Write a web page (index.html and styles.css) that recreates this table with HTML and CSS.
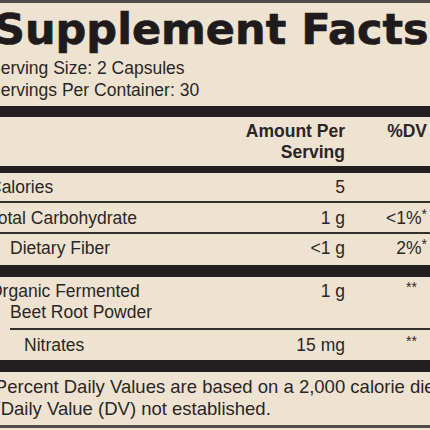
FILE: index.html
```html
<!DOCTYPE html>
<html lang="en">

<head>
    <meta charset="UTF-8">
    <meta name="viewport" content="width=device-width, initial-scale=1.0">
    <title>Supplement Facts</title>
    <link rel="stylesheet" href="styles.css">
</head>

<body>
    <div class="label">
        <h1 class="title">Supplement Facts</h1>
        <div class="serving">
            <p>Serving Size: 2 Capsules</p>
            <p>Servings Per Container: 30</p>
        </div>

        <div class="bar bar-lg"></div>
        <div class="row head">
            <span class="name"></span>
            <span class="amt">Amount Per<br>Serving</span>
            <span class="dv">%DV</span>
        </div>
        <div class="bar bar-md"></div>

        <div class="row row-first">
            <span class="name">Calories</span>
            <span class="amt">5</span>
            <span class="dv"></span>
        </div>
        <div class="rule"></div>
        <div class="row">
            <span class="name">Total Carbohydrate</span>
            <span class="amt">1 g</span>
            <span class="dv">&lt;1%<sup class="ast">*</sup></span>
        </div>
        <div class="rule"></div>
        <div class="row row-last">
            <span class="name sub">Dietary Fiber</span>
            <span class="amt">&lt;1 g</span>
            <span class="dv">2%<sup class="ast">*</sup></span>
        </div>

        <div class="bar bar-lg"></div>
        <div class="row row-tall">
            <span class="name hang">Organic Fermented<br>Beet Root Powder</span>
            <span class="amt">1 g</span>
            <span class="dv"><sup class="ast stars">**</sup></span>
        </div>
        <div class="rule rule-indent"></div>
        <div class="row row-nitr">
            <span class="name subsub">Nitrates</span>
            <span class="amt">15 mg</span>
            <span class="dv"><sup class="ast stars">**</sup></span>
        </div>

        <div class="bar bar-lg"></div>
        <div class="notes">
            <p><sup class="ast">*</sup>Percent Daily Values are based on a 2,000 calorie diet.</p>
            <p><sup class="ast">**</sup>Daily Value (DV) not established.</p>
        </div>
    </div>
</body>

</html>
```

FILE: styles.css
```css
html,
body {
    margin: 0;
    overflow: hidden;
    background-color: #eee3d0;
}

body {
    font-family: "Liberation Sans", Arial, sans-serif;
    font-size: 17.5px;
    color: #2a2627;
}

.label {
    width: 438px;
    margin-left: -11px;
    padding-right: 7px;
    border-top: 3px solid #514c49;
    border-bottom: 3px solid #514c49;
}

.title {
    margin: 5px 0 0 5px;
    font-family: "DejaVu Sans", sans-serif;
    font-size: 43px;
    font-weight: bold;
    line-height: 42px;
    color: #1f1b1c;
    -webkit-text-stroke: 0.7px #1f1b1c;
    white-space: nowrap;
}

.serving {
    padding: 7px 0 5px;
    line-height: 22px;
}

.serving p,
.notes p {
    margin: 0;
    white-space: nowrap;
}

.bar {
    background: #231f20;
    margin-right: -7px;
}

.bar-lg {
    height: 11px;
}

.bar-md {
    height: 7px;
}

.row-last + .bar,
.row-nitr + .bar {
    height: 12px;
}

.rule {
    height: 2px;
    background: #342f2f;
    margin-right: -7px;
}

.rule-indent {
    margin-left: 21px;
}

.row {
    display: grid;
    grid-template-columns: 1fr 109px 82px;
    line-height: 22px;
    padding: 4px 0 3px;
}

.row-first {
    padding: 3px 0 3px;
}

.row-last {
    padding: 3px 0 6px;
}

.row.head {
    line-height: 21px;
    padding: 4px 0 3px;
    font-weight: bold;
}

.row-tall {
    line-height: 21px;
    padding: 4px 0 5px;
}

.row-nitr {
    padding: 4px 0 4px;
}

.amt,
.dv {
    text-align: right;
    white-space: nowrap;
}

.sub {
    padding-left: 21px;
}

.subsub {
    padding-left: 35px;
}

.hang {
    padding-left: 21px;
    text-indent: -21px;
}

.ast {
    font-size: 14px;
    line-height: 0;
    vertical-align: 5px;
}

.stars {
    padding-right: 10px;
}

.notes {
    padding: 4px 0 5px;
    font-size: 18.5px;
    line-height: 22px;
}

.notes .ast {
    font-size: 15px;
}
```
